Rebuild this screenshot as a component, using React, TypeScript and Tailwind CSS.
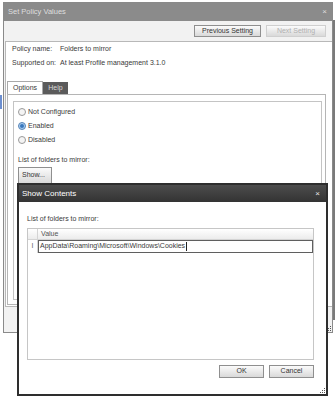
import React from "react";

const font = { fontFamily: '"Liberation Sans", Arial, sans-serif' };

function Radio({ label, checked }: { label: string; checked?: boolean }) {
  return (
    <div className="flex h-[14px] items-center gap-[2px]">
      <span
        className={`flex h-[8px] w-[8px] items-center justify-center rounded-full border ${
          checked ? "border-[#5a86b8] bg-[#a9cdf0]" : "border-[#9a9a9a] bg-[#f4f4f4]"
        }`}
      >
        {checked && <span className="h-[4px] w-[4px] rounded-full bg-[#3a78bd]" />}
      </span>
      <span>{label}</span>
    </div>
  );
}

function Btn({ children, className = "", disabled }: any) {
  return (
    <div
      className={`flex items-center justify-center border bg-gradient-to-b from-[#fbfbfb] to-[#d9d9d9] ${
        disabled ? "border-[#cfcfcf] text-[#b0b0b0]" : "border-[#8f8f8f] text-[#333]"
      } ${className}`}
    >
      {children}
    </div>
  );
}

function Grip() {
  return (
    <div className="grid grid-cols-3 gap-[1px]">
      {[0, 0, 1, 0, 1, 1, 1, 1, 1].map((v, i) => (
        <span key={i} className={`h-[1px] w-[1px] ${v ? "bg-[#555]" : ""}`} />
      ))}
    </div>
  );
}

export default function App() {
  return (
    <div className="relative h-[398px] w-[335px] overflow-hidden bg-white text-[7px] text-[#3a3a3a]" style={font}>
      {/* desktop bits behind */}
      <div className="absolute left-0 top-[95px] h-[14px] w-[2px] bg-[#6d8fd0]" />
      <div className="absolute right-0 top-[20px] h-[300px] w-[2px] bg-[#7a7a7a]" />

      {/* Set Policy Values window */}
      <div className="absolute left-[3px] top-[2px] flex h-[331px] w-[330px] flex-col border border-[#8a8a8a] bg-[#f2f2f2]">
        <div className="flex h-[18px] items-center justify-between bg-[#8b8b8b] px-[4px] text-[7.5px] text-[#dedede]">
          <span>Set Policy Values</span>
          <span className="mr-[1px] text-[8px]">×</span>
        </div>
        <div className="flex h-[20px] items-center justify-end gap-[5px] pr-[6px]">
          <Btn className="h-[12px] w-[67px]">Previous Setting</Btn>
          <Btn className="h-[12px] w-[60px]" disabled>
            Next Setting
          </Btn>
        </div>
        <div className="ml-[1px] flex h-[266px] flex-col border-y border-l border-[#b8b8b8] bg-white">
          <div className="flex h-[14px] items-center pl-[6px]">
            <span className="w-[48px]">Policy name:</span>
            <span>Folders to mirror</span>
          </div>
          <div className="flex h-[15px] items-center pl-[6px]">
            <span className="w-[48px]">Supported on:</span>
            <span>At least Profile management 3.1.0</span>
          </div>
          <div className="ml-[1px] mt-[10px] flex items-end">
            <div className="flex h-[13px] w-[36px] items-center justify-center border border-b-0 border-[#a9a9a9] bg-white">
              Options
            </div>
            <div className="flex h-[12px] w-[25px] items-center justify-center bg-[#5b5b5b] text-[#d8d8d8]">
              Help
            </div>
          </div>
          <div className="ml-[1px] flex h-[211px] w-[319px] flex-col border border-[#b5b5b5] pb-[4px] pl-[5px] pr-[3px] pt-[6px]">
            <div className="flex flex-1 flex-col border border-[#c4c4c4] pl-[4px] pt-[3px]">
              <Radio label="Not Configured" />
              <Radio label="Enabled" checked />
              <Radio label="Disabled" />
              <div className="mt-[6px] flex h-[14px] items-center">List of folders to mirror:</div>
              <Btn className="h-[17px] w-[34px] justify-start pl-[3px]">Show...</Btn>
            </div>
          </div>
        </div>
        <div className="flex flex-1 items-end justify-end pb-[1px] pr-[1px]">
          <Grip />
        </div>
      </div>

      {/* Show Contents dialog */}
      <div className="absolute left-[17px] top-[183px] flex h-[213px] w-[311px] flex-col border-2 border-[#2e2e2e] bg-white">
        <div className="flex h-[17px] items-center justify-between bg-gradient-to-b from-[#4d4d4d] to-[#333] pl-[3px] pr-[6px] text-[8px] text-white">
          <span>Show Contents</span>
          <span className="text-[8px] text-[#e8e8e8]">×</span>
        </div>
        <div className="flex flex-1 flex-col px-[8px]">
          <div className="mt-[11px] flex h-[12px] items-center">List of folders to mirror:</div>
          <div className="mt-[3px] flex h-[132px] w-[287px] flex-col border border-[#c6c6c6]">
            <div className="flex h-[11px] border-b border-[#d4d4d4] bg-gradient-to-b from-white to-[#ececec]">
              <span className="w-[10px] border-r border-[#d4d4d4]" />
              <span className="flex items-center pl-[3px] text-[#555]">Value</span>
            </div>
            <div className="flex h-[13px]">
              <span className="flex w-[10px] items-center justify-center border-r border-[#d4d4d4] text-[#666]">
                I
              </span>
              <div className="flex flex-1 items-center border border-[#5f5f5f] pl-[1px]">
                <span>AppData\Roaming\Microsoft\Windows\Cookies</span>
                <span className="ml-[1px] h-[9px] w-[1px] bg-[#222]" />
              </div>
            </div>
          </div>
          <div className="mt-[5px] flex w-[287px] justify-end gap-[5px]">
            <Btn className="h-[13px] w-[45px]">OK</Btn>
            <Btn className="h-[13px] w-[45px]">Cancel</Btn>
          </div>
        </div>
        <div className="flex justify-end pb-[1px] pr-[1px]">
          <Grip />
        </div>
      </div>
    </div>
  );
}
